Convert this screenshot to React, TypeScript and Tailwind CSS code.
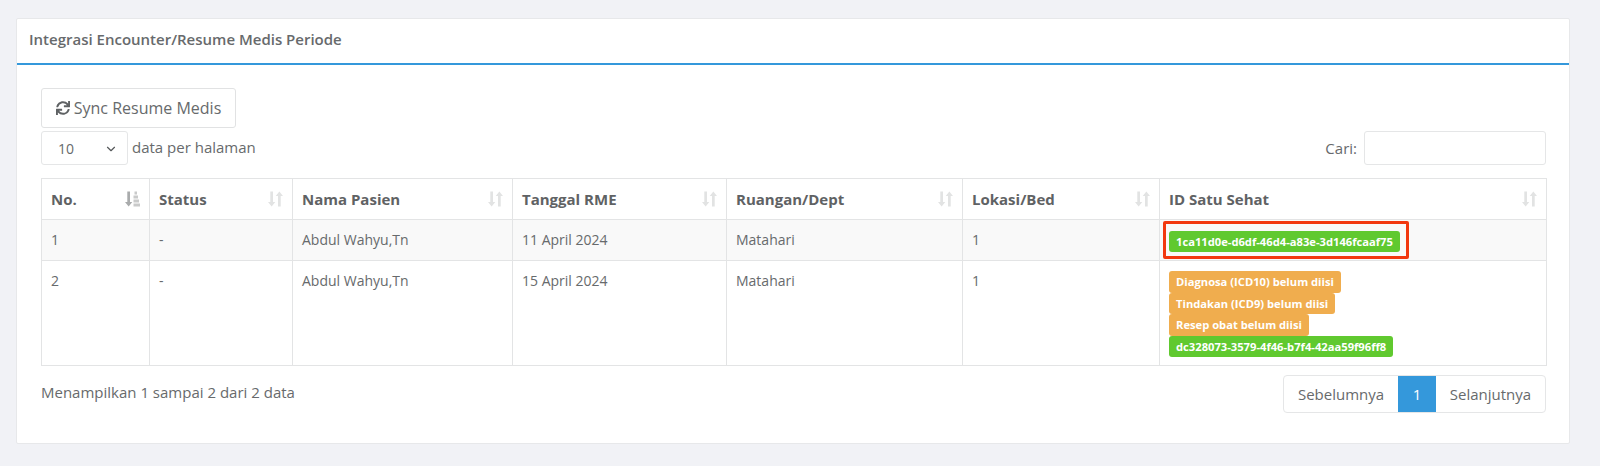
import { ChevronDown } from "lucide-react";
import { FaSync } from "react-icons/fa";

const SortIcon = ({ active = false }: { active?: boolean }) => (
  <svg width="15" height="16" viewBox="0 0 15 16" className="shrink-0">
    <path d="M2.300 0.500h2.700v10.500h2.300L3.650 15.500 0 11h2.300z" fill={active ? "#a9abac" : "#e2e3e3"} />
    {active ? (
      <path d="M9.500 0.500h2.500v3H9.500zM8.500 4.500h4.500v3H8.500zM8.500 8.500h5.500v3H8.500zM8.500 12.500h6.500v3H8.500z" fill="#c9caca" />
    ) : (
      <path d="M10 15.500V5H7.700L11.350 0.500 15 5h-2.300v10.500z" fill="#e2e3e3" />
    )}
  </svg>
);

const Badge = ({ color, children }: { color: "green" | "orange"; children: string }) => (
  <span
    className={`block w-fit rounded-[3px] px-[7px] py-[3px] text-[11.2px] leading-[15.5px] font-bold text-white ${
      color === "green" ? "bg-[#60c92f]" : "bg-[#f0ad4e]"
    }`}
  >
    {children}
  </span>
);

const columns = [
  { label: "No.", width: "w-[108px]", active: true },
  { label: "Status", width: "w-[143px]" },
  { label: "Nama Pasien", width: "w-[220px]" },
  { label: "Tanggal RME", width: "w-[214px]" },
  { label: "Ruangan/Dept", width: "w-[236px]" },
  { label: "Lokasi/Bed", width: "w-[197px]" },
  { label: "ID Satu Sehat", width: "w-[387px]" },
];

const cell = "border border-[#e3e4e5] px-[9px] pt-[9px] align-top";

export default function App() {
  return (
    <div className="min-h-[466px] bg-[#f1f2f6] px-4 pt-[18px] font-['Open_Sans',sans-serif] text-[14px] text-[#676a6c]">
      <div className="h-[426px] w-[1554px] rounded-[2px] border border-[#e7e8ea] bg-white">
        <div className="flex h-[46px] items-center border-b-2 border-[#3498db] pb-[3px] pl-3 text-[15px] font-semibold text-[#676a6c]">
          Integrasi Encounter/Resume Medis Periode
        </div>

        <div className="pt-[23px] pr-[23px] pl-[24px]">
          <button className="flex h-[40px] w-[195px] items-center justify-center gap-[4px] rounded-[3px] border border-[#e1e2e3] text-[16px] text-[#676a6c]">
            <FaSync size={14} className="text-[#5f6264]" />
            Sync Resume Medis
          </button>

          <div className="mt-[3px] flex h-[34px] items-center justify-between">
            <div className="flex items-center gap-1">
              <div className="flex h-[34px] w-[87px] items-center justify-between rounded-[3px] border border-[#e5e6e7] pt-px pr-[9px] pl-4">
                10
                <ChevronDown size={14} className="text-[#55585a]" />
              </div>
              <span className="relative -top-px text-[15px]">data per halaman</span>
            </div>
            <div className="flex items-center gap-[7px]">
              <span className="text-[15px]">Cari:</span>
              <input className="h-[34px] w-[182px] rounded-[3px] border border-[#e5e6e7] outline-none" />
            </div>
          </div>

          <table className="mt-[13px] w-[1505px] table-fixed border-collapse border-[#e3e4e5]">
            <thead>
              <tr className="h-[41px]">
                {columns.map((col) => (
                  <th key={col.label} className={`${col.width} border border-[#e3e4e5] px-[9px] text-left text-[15px] font-bold text-[#5f6264]`}>
                    <div className="flex items-center justify-between">
                      {col.label}
                      <SortIcon active={col.active} />
                    </div>
                  </th>
                ))}
              </tr>
            </thead>
            <tbody>
              <tr className="h-[41px] bg-[#f9f9f9]">
                <td className={cell}>1</td>
                <td className={cell}>-</td>
                <td className={cell}>Abdul Wahyu,Tn</td>
                <td className={cell}>11 April 2024</td>
                <td className={cell}>Matahari</td>
                <td className={cell}>1</td>
                <td className="relative border border-[#e3e4e5] px-[9px] pt-[3px] align-middle">
                  <Badge color="green">1ca11d0e-d6df-46d4-a83e-3d146fcaaf75</Badge>
                  <div className="absolute top-[1px] left-[3px] h-[38px] w-[246px] rounded-[2px] border-[3px] border-[#f2380f]" />
                </td>
              </tr>
              <tr className="h-[105px]">
                <td className={cell}>2</td>
                <td className={cell}>-</td>
                <td className={cell}>Abdul Wahyu,Tn</td>
                <td className={cell}>15 April 2024</td>
                <td className={cell}>Matahari</td>
                <td className={cell}>1</td>
                <td className="border border-[#e3e4e5] px-[9px] pt-[10px] align-top">
                  <Badge color="orange">Diagnosa (ICD10) belum diisi</Badge>
                  <Badge color="orange">Tindakan (ICD9) belum diisi</Badge>
                  <Badge color="orange">Resep obat belum diisi</Badge>
                  <Badge color="green">dc328073-3579-4f46-b7f4-42aa59f96ff8</Badge>
                </td>
              </tr>
            </tbody>
          </table>

          <div className="mt-[9px] flex items-start justify-between">
            <span className="mt-[6px] text-[15px]">Menampilkan 1 sampai 2 dari 2 data</span>
            <div className="flex h-[38px] overflow-hidden rounded-[4px] border border-[#e5e6e7] text-[15px]">
              <span className="flex w-[114px] items-center justify-center">Sebelumnya</span>
              <span className="flex w-[38px] items-center justify-center bg-[#3498db] text-white">1</span>
              <span className="flex w-[109px] items-center justify-center">Selanjutnya</span>
            </div>
          </div>
        </div>
      </div>
    </div>
  );
}
